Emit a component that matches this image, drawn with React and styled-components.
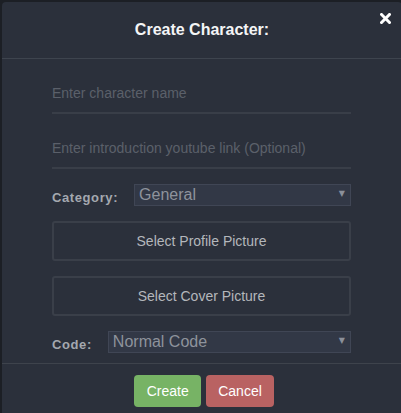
import React, { useState } from 'react'
import styled, { createGlobalStyle } from 'styled-components'

const GlobalStyle = createGlobalStyle`
  html, body {
    margin: 0;
    padding: 0;
    background: #1c1f25;
    font-family: "Liberation Sans", Arial, sans-serif;
    overflow: hidden;
  }
`

function Select({ value, options, onChange }) {
  return (
    <SelectWrap>
      <SelectBox value={value} onChange={(e) => onChange(e.target.value)}>
        {options.map((o) => (
          <option key={o}>{o}</option>
        ))}
      </SelectBox>
      <Arrow>▼</Arrow>
    </SelectWrap>
  )
}

export default function App() {
  const [name, setName] = useState('')
  const [link, setLink] = useState('')
  const [category, setCategory] = useState('General')
  const [code, setCode] = useState('Normal Code')

  return (
    <>
      <GlobalStyle />
      <Modal>
        <Header>
          <Title>Create Character:</Title>
          <CloseButton aria-label="close">
            <svg width="11" height="11" viewBox="0 0 11 11">
              <path
                d="M1.5 1.5 L9.5 9.5 M9.5 1.5 L1.5 9.5"
                stroke="#fff"
                strokeWidth="3"
                strokeLinecap="square"
              />
            </svg>
          </CloseButton>
        </Header>
        <Body>
          <LineInput
            placeholder="Enter character name"
            value={name}
            onChange={(e) => setName(e.target.value)}
          />
          <LineInput
            placeholder="Enter introduction youtube link (Optional)"
            value={link}
            onChange={(e) => setLink(e.target.value)}
          />
          <FieldRow>
            <Label>Category:</Label>
            <Select
              value={category}
              options={['General', 'Anime', 'Game', 'Movie']}
              onChange={setCategory}
            />
          </FieldRow>
          <PickButton>Select Profile Picture</PickButton>
          <PickButton>Select Cover Picture</PickButton>
          <FieldRow>
            <Label>Code:</Label>
            <Select
              value={code}
              options={['Normal Code', 'Custom Code']}
              onChange={setCode}
            />
          </FieldRow>
        </Body>
        <Footer>
          <ActionButton color="#77b365">Create</ActionButton>
          <ActionButton color="#b96262">Cancel</ActionButton>
        </Footer>
      </Modal>
    </>
  )
}

const Modal = styled.div`
  margin: 2px 0 0 2px;
  width: 400px;
  height: 430px;
  background: #2b303b;
  border-radius: 4px;
`
const Header = styled.div`
  position: relative;
  height: 56px;
  display: flex;
  align-items: center;
  justify-content: center;
  border-bottom: 1px solid #3e444e;
`
const Title = styled.h3`
  margin: 0;
  font-size: 16px;
  font-weight: bold;
  color: #f4f5f6;
`
const CloseButton = styled.span`
  position: absolute;
  top: 11px;
  right: 11px;
  display: flex;
  cursor: pointer;
`
const Body = styled.div`
  display: flex;
  flex-direction: column;
  gap: 15px;
  padding: 15px 51px 10px 50px;
`
const LineInput = styled.input`
  box-sizing: border-box;
  height: 40px;
  width: 100%;
  padding: 0;
  background: transparent;
  border: none;
  border-bottom: 2px solid #393e48;
  color: #c9ccd1;
  font-family: "Liberation Sans", Arial, sans-serif;
  font-size: 14px;
  &::placeholder {
    color: #5b606a;
  }
  &:focus {
    outline: none;
  }
`
const FieldRow = styled.div`
  display: flex;
  align-items: center;
  gap: 16px;
  height: 22px;
`
const Label = styled.span`
  font-size: 13px;
  font-weight: bold;
  letter-spacing: 0.6px;
  color: #a4a8af;
  margin-top: 4px;
`
const SelectWrap = styled.div`
  position: relative;
  flex: 1;
  height: 22px;
`
const SelectBox = styled.select`
  appearance: none;
  box-sizing: border-box;
  width: 100%;
  height: 22px;
  padding: 0 0 0 4px;
  background: #323846;
  border: 1px solid #404655;
  color: #8e939c;
  font-family: "Liberation Sans", Arial, sans-serif;
  font-size: 16px;
  line-height: 20px;
  &:focus {
    outline: none;
  }
`
const Arrow = styled.span`
  position: absolute;
  right: 6px;
  top: 5px;
  font-family: "DejaVu Sans", sans-serif;
  font-size: 8px;
  color: #8b909a;
  pointer-events: none;
`
const PickButton = styled.button`
  box-sizing: border-box;
  height: 40px;
  width: 100%;
  padding-bottom: 2px;
  background: transparent;
  border: 2px solid #3a3f49;
  border-radius: 3px;
  color: #b4b7bc;
  font-family: "Liberation Sans", Arial, sans-serif;
  font-size: 14px;
  cursor: pointer;
`
const Footer = styled.div`
  display: flex;
  justify-content: center;
  gap: 5px;
  padding: 11px 0 0 4px;
  border-top: 1px solid #3e434c;
`
const ActionButton = styled.button`
  height: 32px;
  padding: 0 12px;
  min-width: 67px;
  border: none;
  border-radius: 4px;
  background: ${(p) => p.color};
  color: #ffffff;
  font-family: "Liberation Sans", Arial, sans-serif;
  font-size: 14px;
  cursor: pointer;
`
